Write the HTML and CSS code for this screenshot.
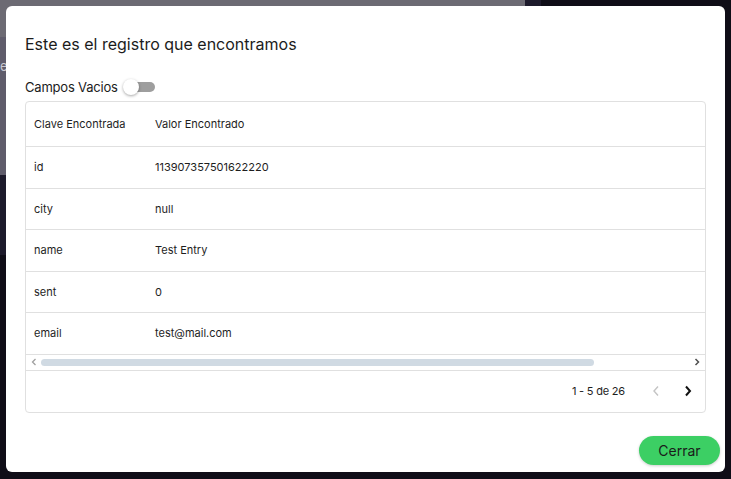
FILE: index.html
```html
<!DOCTYPE html>
<html lang="es">
<head>
<meta charset="utf-8">
<title>Registro</title>
<link rel="stylesheet" href="styles.css">
</head>
<body>
<div class="backdrop">
  <div class="page-main">
    <div class="page-top"></div>
    <div class="page-band"><span class="cut-text">er</span></div>
    <div class="page-dark"></div>
  </div>
  <div class="page-side"></div>
</div>

<div class="modal">
  <h2 class="modal-title">Este es el registro que encontramos</h2>
  <div class="toggle-row">
    <span class="toggle-label">Campos Vacios</span>
    <span class="switch"><span class="switch-track"></span><span class="switch-thumb"></span></span>
  </div>
  <div class="table-box">
    <div class="row head">
      <div class="cell key">Clave Encontrada</div>
      <div class="cell val">Valor Encontrado</div>
    </div>
    <div class="row">
      <div class="cell key">id</div>
      <div class="cell val">113907357501622220</div>
    </div>
    <div class="row">
      <div class="cell key">city</div>
      <div class="cell val">null</div>
    </div>
    <div class="row">
      <div class="cell key">name</div>
      <div class="cell val">Test Entry</div>
    </div>
    <div class="row">
      <div class="cell key">sent</div>
      <div class="cell val">0</div>
    </div>
    <div class="row">
      <div class="cell key">email</div>
      <div class="cell val">test@mail.com</div>
    </div>
    <div class="hscroll">
      <svg class="sarrow left" width="6" height="8" viewBox="0 0 6 8"><path d="M4.5 1 L1.5 4 L4.5 7" fill="none" stroke="#a0a0a0" stroke-width="1.3"/></svg>
      <div class="strack"><div class="sthumb"></div></div>
      <svg class="sarrow right" width="6" height="8" viewBox="0 0 6 8"><path d="M1.5 1 L4.5 4 L1.5 7" fill="none" stroke="#505050" stroke-width="1.5"/></svg>
    </div>
    <div class="pager">
      <span class="pager-info">1 - 5 de 26</span>
      <span class="pbtn disabled"><svg width="8" height="12" viewBox="0 0 8 12"><path d="M6 1.5 L2 6 L6 10.5" fill="none" stroke="#c4c4c4" stroke-width="1.4"/></svg></span>
      <span class="pbtn"><svg width="8" height="12" viewBox="0 0 8 12"><path d="M2 1.5 L6 6 L2 10.5" fill="none" stroke="#111" stroke-width="2"/></svg></span>
    </div>
  </div>
  <div class="modal-footer">
    <button class="btn-close">Cerrar</button>
  </div>
</div>
</body>
</html>
```

FILE: styles.css
```css
* { box-sizing: border-box; }
html, body { margin: 0; padding: 0; }
body {
  width: 731px;
  height: 479px;
  overflow: hidden;
  background: #0f0d17;
  font-family: "Inter", "Noto Sans", sans-serif;
  color: #1e1e1e;
  position: relative;
}
.backdrop { display: flex; }
.page-main { width: 525px; display: flex; flex-direction: column; }
.page-top { height: 37px; background: #6c6a73; }
.page-band { height: 138px; background: #5f5c6b; padding-top: 21px; overflow: hidden; }
.cut-text { display: block; margin-left: 0; color: #c9c8d0; font-size: 13px; }
.page-dark { height: 80px; background: #1d1a2b; }
.page-side { width: 16px; height: 255px; background: #1d1a2b; }

.modal {
  position: absolute;
  left: 6px;
  top: 6px;
  width: 719px;
  height: 466px;
  background: #fff;
  border-radius: 6px;
  padding: 27px 19px 0 19px;
  display: flex;
  flex-direction: column;
}
.modal-title {
  margin: 0;
  font-size: 16px;
  font-weight: 400;
  line-height: 22px;
  color: #1c1c1c;
}
.toggle-row {
  display: flex;
  align-items: center;
  margin-top: 23px;
  height: 18px;
}
.toggle-label { font-size: 13px; color: #1c1c1c; letter-spacing: -0.2px; }
.switch { position: relative; width: 34px; height: 18px; margin-left: 5px; display: inline-block; }
.switch-track {
  position: absolute; left: 4px; top: 4px; width: 28px; height: 10px;
  border-radius: 5px; background: #9e9e9e;
}
.switch-thumb {
  position: absolute; left: 0; top: 1px; width: 16px; height: 16px;
  border-radius: 50%; background: #fff;
  box-shadow: 0 1px 3px rgba(0,0,0,0.35);
}

.table-box {
  margin-top: 5px;
  border: 1px solid #e0e0e0;
  border-radius: 4px;
  display: flex;
  flex-direction: column;
}
.row {
  display: flex;
  align-items: center;
  height: 41.5px;
  border-bottom: 1px solid #e0e0e0;
  font-size: 11px;
  color: #1e1e1e;
}
.row.head { height: 45px; }
.cell { padding: 0 9px; }
.cell.key { width: 121px; padding-left: 8px; }
.cell.val { flex: 1; padding-left: 8px; }

.hscroll {
  height: 16px;
  display: flex;
  align-items: center;
  border-bottom: 1px solid #e0e0e0;
  padding: 0 5px 0 5px;
}
.sarrow { flex: none; }
.strack { flex: 1; padding: 0 0 0 4px; height: 7px; display: flex; }
.sthumb { width: 553px; height: 7px; border-radius: 4px; background: #d0dae3; }

.pager {
  height: 41px;
  display: flex;
  align-items: center;
  justify-content: flex-end;
  padding-right: 1px;
  font-size: 11px;
}
.pager-info { margin-right: 15px; letter-spacing: -0.2px; }
.pbtn { width: 32px; display: flex; justify-content: center; }

.modal-footer {
  margin-top: auto;
  display: flex;
  justify-content: flex-end;
  margin-right: -14px;
  padding-bottom: 7px;
}
.btn-close {
  width: 81px;
  height: 29px;
  border: none;
  border-radius: 15px;
  background: #3ccf64;
  color: #1a1a1a;
  font-family: "Inter", sans-serif;
  font-size: 14px;
  box-shadow: 0 1px 3px rgba(0,0,0,0.2);
  padding: 0;
}
```
